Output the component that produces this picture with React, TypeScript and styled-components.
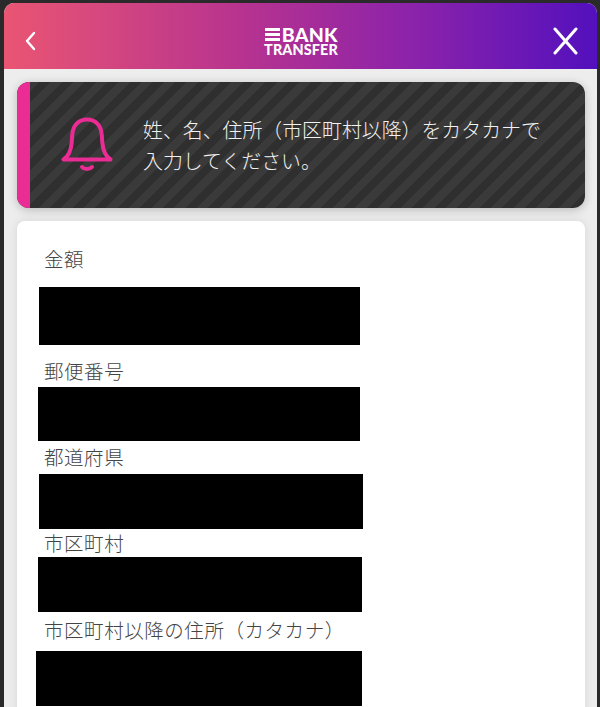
import React from "react";
import styled, { createGlobalStyle } from "styled-components";

const GlobalStyle = createGlobalStyle`
  html, body {
    margin: 0;
    padding: 0;
    height: 707px;
    overflow: hidden;
    background: #2a2a2a;
    font-family: "Noto Sans CJK JP", "Noto Sans", sans-serif;
  }
`;

const Page = styled.div`
  height: 707px;
  padding: 3px 3px 0 4px;
  box-sizing: border-box;
  overflow: hidden;
`;

const Modal = styled.div`
  height: 704px;
  background: #ededed;
  border-radius: 10px 10px 0 0;
  overflow: hidden;
`;

const Header = styled.header`
  height: 66px;
  box-sizing: border-box;
  padding: 10px 19px 0 21px;
  display: grid;
  grid-template-columns: 1fr auto 1fr;
  align-items: center;
  background: linear-gradient(90deg, #ea5573 0%, #b7338f 40%, #8a22ab 70%, #5310bd 100%);
`;

const BackButton = styled.div`
  display: flex;
  color: #fff;
`;

const CloseButton = styled.div`
  display: flex;
  justify-content: flex-end;
  color: #fff;
`;

const Logo = styled.div`
  display: flex;
  flex-direction: column;
  align-items: flex-end;
  gap: 2px;
  margin-right: 1px;
  color: #fff;
  font-family: "Lato", "Liberation Sans", sans-serif;
  font-weight: 900;
`;

const LogoTop = styled.div`
  display: flex;
  align-items: center;
  gap: 2px;
  font-size: 19.5px;
  line-height: 14px;
  letter-spacing: 0.3px;
`;

const LogoBars = styled.span`
  width: 15px;
  height: 13px;
  background: repeating-linear-gradient(180deg, #fff 0 3px, transparent 3px 5px);
`;

const LogoBottom = styled.div`
  font-size: 14.4px;
  line-height: 11px;
  letter-spacing: 0.1px;
`;

const Body = styled.div`
  padding: 13px 12px 0 13px;
  display: flex;
  flex-direction: column;
  gap: 13px;
`;

const Notice = styled.section`
  height: 126px;
  display: flex;
  border-radius: 12px;
  overflow: hidden;
  box-shadow: 0 2px 10px rgba(0, 0, 0, 0.22);
  background: repeating-linear-gradient(
    135deg,
    #2f2f2f 0 8px,
    #3a3a3a 8px 16px
  );
`;

const NoticeStripe = styled.div`
  width: 13px;
  flex: none;
  background: #ea2c94;
`;

const NoticeIcon = styled.div`
  width: 113px;
  flex: none;
  display: flex;
  align-items: center;
  justify-content: center;
  color: #ea2c94;
`;

const NoticeText = styled.p`
  margin: 0;
  align-self: center;
  width: 410px;
  color: #f2f2f2;
  font-size: 19.9px;
  font-weight: 300;
  line-height: 31px;
`;

const Card = styled.section`
  height: 520px;
  padding: 10px 0 0;
  background: #fff;
  border-radius: 8px 8px 0 0;
  box-shadow: 0 0 10px rgba(0, 0, 0, 0.1);
`;

const Field = styled.div``;

const Label = styled.div<{ $height: number; $bottom: number }>`
  height: ${(p) => p.$height}px;
  padding: 0 0 ${(p) => p.$bottom}px 27px;
  box-sizing: border-box;
  display: flex;
  align-items: flex-end;
  color: #444;
  font-size: 19.5px;
  font-weight: 300;
  line-height: 26px;
  letter-spacing: 0.55px;
`;

const Redacted = styled.div<{ $left: number; $width: number; $height: number }>`
  margin-left: ${(p) => p.$left}px;
  width: ${(p) => p.$width}px;
  height: ${(p) => p.$height}px;
  background: #000;
`;

const fields = [
  { label: "金額", labelHeight: 56, bottom: 15, left: 22, width: 321, height: 58 },
  { label: "郵便番号", labelHeight: 42, bottom: 3, left: 21, width: 322, height: 54 },
  { label: "都道府県", labelHeight: 33, bottom: 4, left: 22, width: 324, height: 55 },
  { label: "市区町村", labelHeight: 28, bottom: 1, left: 21, width: 324, height: 55 },
  { label: "市区町村以降の住所（カタカナ）", labelHeight: 39, bottom: 8, left: 19, width: 326, height: 55 },
];

const App = () => {
  return (
    <>
      <GlobalStyle />
      <Page>
        <Modal>
          <Header>
            <BackButton>
              <svg width="11" height="20" viewBox="0 0 11 20" fill="none" stroke="currentColor" strokeWidth="2.4" strokeLinecap="round" strokeLinejoin="round">
                <path d="M9 2 2 10l7 8" />
              </svg>
            </BackButton>
            <Logo>
              <LogoTop>
                <LogoBars />
                BANK
              </LogoTop>
              <LogoBottom>TRANSFER</LogoBottom>
            </Logo>
            <CloseButton>
              <svg width="25" height="28" viewBox="0 0 25 28" fill="none" stroke="currentColor" strokeWidth="3" strokeLinecap="round">
                <path d="M2 2 23 26M23 2 2 26" />
              </svg>
            </CloseButton>
          </Header>
          <Body>
            <Notice>
              <NoticeStripe />
              <NoticeIcon>
                <svg width="52" height="56" viewBox="0 0 52 56" fill="none" stroke="currentColor" strokeLinecap="round" strokeLinejoin="round">
                  <path strokeWidth="4" d="M2.500 42.500h47c-5.500-3.500-7.500-9-8.200-17-.3-3.500-.3-6-.6-8.500C40 8.500 34.500 2.500 26 2.500S12 8.500 11.300 17c-.3 2.500-.3 5-.6 8.500-.7 8-2.700 13.500-8.200 17Z" />
                  <path strokeWidth="4" d="M21 50c2.500 2.800 7.500 2.800 10 0" />
                </svg>
              </NoticeIcon>
              <NoticeText>
                姓、名、住所（市区町村以降）をカタカナで
                <br />
                入力してください。
              </NoticeText>
            </Notice>
            <Card>
              {fields.map((f) => (
                <Field key={f.label}>
                  <Label $height={f.labelHeight} $bottom={f.bottom}>
                    {f.label}
                  </Label>
                  <Redacted $left={f.left} $width={f.width} $height={f.height} />
                </Field>
              ))}
            </Card>
          </Body>
        </Modal>
      </Page>
    </>
  );
};

export default App;
